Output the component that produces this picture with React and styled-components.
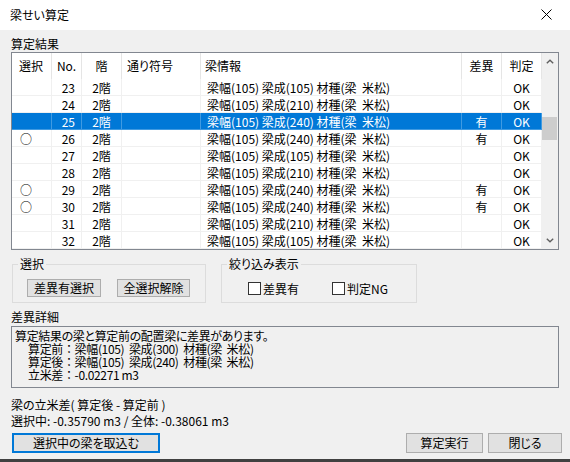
import React from "react";
import styled, { createGlobalStyle } from "styled-components";

const rows = [
    { no: 23, size: 105, sel: false, diff: false },
    { no: 24, size: 210, sel: false, diff: false },
    { no: 25, size: 240, sel: false, diff: true, active: true },
    { no: 26, size: 240, sel: true, diff: true },
    { no: 27, size: 105, sel: false, diff: false },
    { no: 28, size: 210, sel: false, diff: false },
    { no: 29, size: 240, sel: true, diff: true },
    { no: 30, size: 240, sel: true, diff: true },
    { no: 31, size: 210, sel: false, diff: false },
    { no: 32, size: 105, sel: false, diff: false },
];

const columns = [
    { key: "sel", label: "選択", align: "flex-start", pad: 7 },
    { key: "no", label: "No.", align: "center", pad: 0 },
    { key: "floor", label: "階", align: "center", pad: 0 },
    { key: "grid", label: "通り符号", align: "flex-start", pad: 5 },
    { key: "info", label: "梁情報", align: "flex-start", pad: 4 },
    { key: "diff", label: "差異", align: "center", pad: 0 },
    { key: "judge", label: "判定", align: "center", pad: 0 },
];

const details = [
    { label: "算定前", value: "梁幅(105)  梁成(300)  材種(梁  米松)" },
    { label: "算定後", value: "梁幅(105)  梁成(240)  材種(梁  米松)" },
    { label: "立米差", value: "-0.02271 m3" },
];

export default function App() {
    return (
        <>
            <GlobalStyle />
            <Window>
                <TitleBar>
                    <span>梁せい算定</span>
                    <svg width="11" height="11" viewBox="0 0 11 11">
                        <path d="M0.5 0.5 L10.5 10.5 M10.5 0.5 L0.5 10.5" stroke="#000" strokeWidth="1" />
                    </svg>
                </TitleBar>
                <Body>
                    <SectionLabel>算定結果</SectionLabel>
                    <ListView>
                        <ListGrid>
                            <Row>
                                {columns.map((c) => (
                                    <HeadCell key={c.key} $align={c.align} $pad={c.pad}>
                                        {c.label}
                                    </HeadCell>
                                ))}
                            </Row>
                            {rows.map((r) => (
                                <Row key={r.no} $active={r.active}>
                                    <Cell $align="flex-start" $pad={8}>{r.sel ? "○" : ""}</Cell>
                                    <Cell $align="flex-end" $pad={6}>{r.no}</Cell>
                                    <Cell $align="center">2階</Cell>
                                    <Cell />
                                    <Cell $align="flex-start" $pad={6}>
                                        {`梁幅(105) 梁成(${r.size}) 材種(梁  米松)`}
                                    </Cell>
                                    <Cell $align="center">{r.diff ? "有" : ""}</Cell>
                                    <Cell $align="center">OK</Cell>
                                </Row>
                            ))}
                        </ListGrid>
                        <ScrollBar>
                            <ArrowButton>
                                <svg width="8" height="5" viewBox="0 0 8 5">
                                    <polyline points="0.8,4.3 4,1.2 7.2,4.3" fill="none" stroke="#606060" strokeWidth="1.4" />
                                </svg>
                            </ArrowButton>
                            <Track>
                                <Thumb />
                            </Track>
                            <ArrowButton>
                                <svg width="8" height="5" viewBox="0 0 8 5">
                                    <polyline points="0.8,0.7 4,3.8 7.2,0.7" fill="none" stroke="#606060" strokeWidth="1.4" />
                                </svg>
                            </ArrowButton>
                        </ScrollBar>
                    </ListView>

                    <Groups>
                        <Group $w={194}>
                            <Legend>選択</Legend>
                            <GroupRow $pl={14} $gap={16}>
                                <Button $w={74}>差異有選択</Button>
                                <Button $w={73}>全選択解除</Button>
                            </GroupRow>
                        </Group>
                        <Group $w={196}>
                            <Legend>絞り込み表示</Legend>
                            <GroupRow $pl={26} $gap={0}>
                                <CheckItem>
                                    <Box />
                                    差異有
                                </CheckItem>
                                <CheckItem>
                                    <Box />
                                    判定NG
                                </CheckItem>
                            </GroupRow>
                        </Group>
                    </Groups>

                    <DetailLabel>差異詳細</DetailLabel>
                    <DetailBox>
                        <DetailLine>算定結果の梁と算定前の配置梁に差異があります。</DetailLine>
                        {details.map((d) => (
                            <DetailLine key={d.label} $indent>
                                {d.label}
                                <Colon>：</Colon>
                                {d.value}
                            </DetailLine>
                        ))}
                    </DetailBox>

                    <Summary>
                        <div>梁の立米差( 算定後 - 算定前 )</div>
                        <div>選択中: -0.35790 m3 / 全体: -0.38061 m3</div>
                    </Summary>

                    <ButtonBar>
                        <Button $w={148} $h={20} $default>選択中の梁を取込む</Button>
                        <RightButtons>
                            <Button $w={77} $h={20}>算定実行</Button>
                            <Button $w={74} $h={20}>閉じる</Button>
                        </RightButtons>
                    </ButtonBar>
                </Body>
                <BottomEdge />
            </Window>
        </>
    );
}

const GlobalStyle = createGlobalStyle`
    html, body {
        margin: 0;
        padding: 0;
    }
    body {
        font-family: "Noto Sans CJK JP", sans-serif;
        font-size: 12px;
        color: #000;
        background: #f0f0f0;
        font-feature-settings: "palt";
    }
`;

const Window = styled.div`
    width: 570px;
    height: 462px;
    display: flex;
    flex-direction: column;
    overflow: hidden;
    background: #f0f0f0;
`;

const TitleBar = styled.div`
    height: 30px;
    flex-shrink: 0;
    background: #fff;
    display: flex;
    align-items: center;
    justify-content: space-between;
    padding: 0 18px 1px 10px;
    box-sizing: border-box;
    line-height: 14px;
`;

const Body = styled.div`
    flex: 1;
    display: flex;
    flex-direction: column;
    padding: 0 11px;
`;

const SectionLabel = styled.div`
    line-height: 14px;
    padding: 7px 0 1px 0;
`;

const ListView = styled.div`
    display: flex;
    height: 198px;
    box-sizing: border-box;
    border: 1px solid #828790;
    background: #fff;
`;

const ListGrid = styled.div`
    width: 530px;
    display: flex;
    flex-direction: column;
`;

const Row = styled.div`
    display: grid;
    grid-template-columns: 40px 30px 40px 79px 261px 40px 40px;
    background: ${(p) => (p.$active ? "#0078d7" : "transparent")};
    color: ${(p) => (p.$active ? "#fff" : "#000")};

    & > div {
        border-color: ${(p) => (p.$active ? "rgba(255,255,255,0.25)" : undefined)};
    }
`;

const HeadCell = styled.div`
    height: 26px;
    box-sizing: border-box;
    border-right: 1px solid #e5e5e5;
    display: flex;
    align-items: center;
    justify-content: ${(p) => p.$align};
    padding: 0 ${(p) => p.$pad}px 1px;
`;

const Cell = styled.div`
    height: 17px;
    box-sizing: border-box;
    border-right: 1px solid #f0f0f0;
    border-bottom: 1px solid #f0f0f0;
    display: flex;
    align-items: center;
    justify-content: ${(p) => p.$align || "flex-start"};
    padding: 0 ${(p) => p.$pad || 0}px;
    white-space: pre;
    overflow: hidden;
`;

const ScrollBar = styled.div`
    flex: 1;
    display: flex;
    flex-direction: column;
    background: #f0f0f0;
`;

const ArrowButton = styled.div`
    height: 17px;
    display: flex;
    align-items: center;
    justify-content: center;
`;

const Track = styled.div`
    flex: 1;
    padding-top: 47px;
`;

const Thumb = styled.div`
    height: 23px;
    margin-right: 1px;
    background: #cdcdcd;
`;

const Groups = styled.div`
    display: flex;
    gap: 15px;
    margin-top: 7px;
    padding-left: 1px;
`;

const Group = styled.fieldset`
    margin: 0;
    padding: 0 0 5px 0;
    width: ${(p) => p.$w}px;
    min-width: 0;
    box-sizing: border-box;
    border: 1px solid #dcdcdc;
`;

const Legend = styled.legend`
    margin-left: 5px;
    padding: 0 2px;
    line-height: 14px;
`;

const GroupRow = styled.div`
    display: flex;
    align-items: center;
    height: 18px;
    gap: ${(p) => p.$gap}px;
    padding: 8px 0 0 ${(p) => p.$pl}px;
`;

const Button = styled.div`
    width: ${(p) => p.$w}px;
    height: ${(p) => p.$h || 18}px;
    box-sizing: border-box;
    background: #e1e1e1;
    border: ${(p) => (p.$default ? "2px solid #0078d7" : "1px solid #adadad")};
    display: flex;
    align-items: center;
    justify-content: center;
    line-height: 14px;
`;

const CheckItem = styled.div`
    width: 90px;
    display: flex;
    align-items: center;
    gap: 2px;
`;

const Box = styled.span`
    width: 13px;
    height: 13px;
    box-sizing: border-box;
    border: 1px solid #333;
    background: #fff;
`;

const DetailLabel = styled.div`
    line-height: 14px;
    margin: 7px 0 2px;
`;

const DetailBox = styled.div`
    height: 62px;
    box-sizing: border-box;
    border: 1px solid #828790;
    padding: 2px 3px;
    line-height: 13px;
    letter-spacing: -0.35px;
`;

const DetailLine = styled.div`
    white-space: pre;
    padding-left: ${(p) => (p.$indent ? 13 : 0)}px;
`;

const Colon = styled.span`
    font-feature-settings: normal;
`;

const Summary = styled.div`
    margin-top: 9px;
    line-height: 16px;
`;

const ButtonBar = styled.div`
    margin: 4px -3px 0 1px;
    display: flex;
    justify-content: space-between;
`;

const RightButtons = styled.div`
    display: flex;
    gap: 5px;
`;

const BottomEdge = styled.div`
    height: 3px;
    flex-shrink: 0;
    background: #404040;
`;
